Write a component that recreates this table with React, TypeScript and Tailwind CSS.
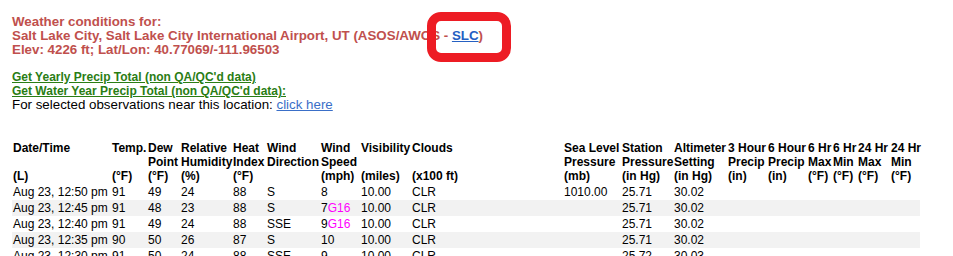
import React from 'react';

const font = { fontFamily: '"Liberation Sans", Arial, sans-serif' };

type Col = { w: string; head: [string, string, string] };

const cols: Col[] = [
  { w: 'w-[99px]', head: ['Date/Time', '', '(L)'] },
  { w: 'w-[36px]', head: ['Temp.', '', '(°F)'] },
  { w: 'w-[33px]', head: ['Dew', 'Point', '(°F)'] },
  { w: 'w-[52px]', head: ['Relative', 'Humidity', '(%)'] },
  { w: 'w-[34px]', head: ['Heat', 'Index', '(°F)'] },
  { w: 'w-[54px]', head: ['Wind', 'Direction', ''] },
  { w: 'w-[40px]', head: ['Wind', 'Speed', '(mph)'] },
  { w: 'w-[51px]', head: ['Visibility', '', '(miles)'] },
  { w: 'w-[152px]', head: ['Clouds', '', '(x100 ft)'] },
  { w: 'w-[58px]', head: ['Sea Level', 'Pressure', '(mb)'] },
  { w: 'w-[52px]', head: ['Station', 'Pressure', '(in Hg)'] },
  { w: 'w-[54px]', head: ['Altimeter', 'Setting', '(in Hg)'] },
  { w: 'w-[40px]', head: ['3 Hour', 'Precip', '(in)'] },
  { w: 'w-[40px]', head: ['6 Hour', 'Precip', '(in)'] },
  { w: 'w-[25px]', head: ['6 Hr', 'Max', '(°F)'] },
  { w: 'w-[25px]', head: ['6 Hr', 'Min', '(°F)'] },
  { w: 'w-[33px]', head: ['24 Hr', 'Max', '(°F)'] },
  { w: 'w-[30px]', head: ['24 Hr', 'Min', '(°F)'] },
];

type Row = {
  time: string; temp: string; dew: string; rh: string; heat: string; dir: string;
  spd: string; gust?: string; vis: string; clouds: string; slp: string; stn: string; alt: string;
};

const rows: Row[] = [
  { time: 'Aug 23, 12:50 pm', temp: '91', dew: '49', rh: '24', heat: '88', dir: 'S', spd: '8', vis: '10.00', clouds: 'CLR', slp: '1010.00', stn: '25.71', alt: '30.02' },
  { time: 'Aug 23, 12:45 pm', temp: '91', dew: '48', rh: '23', heat: '88', dir: 'S', spd: '7', gust: 'G16', vis: '10.00', clouds: 'CLR', slp: '', stn: '25.71', alt: '30.02' },
  { time: 'Aug 23, 12:40 pm', temp: '91', dew: '49', rh: '24', heat: '88', dir: 'SSE', spd: '9', gust: 'G16', vis: '10.00', clouds: 'CLR', slp: '', stn: '25.71', alt: '30.02' },
  { time: 'Aug 23, 12:35 pm', temp: '90', dew: '50', rh: '26', heat: '87', dir: 'S', spd: '10', vis: '10.00', clouds: 'CLR', slp: '', stn: '25.71', alt: '30.02' },
  { time: 'Aug 23, 12:30 pm', temp: '91', dew: '50', rh: '24', heat: '88', dir: 'SSE', spd: '9', vis: '10.00', clouds: 'CLR', slp: '', stn: '25.72', alt: '30.03' },
];

const td = 'px-[1px] py-[1px] align-top whitespace-nowrap';

export default function App() {
  return (
    <div className="relative w-[953px] h-[256px] overflow-hidden bg-white text-black pl-[12px] pt-[15px]" style={font}>
      {/* station title */}
      <div className="text-[13.33px] font-bold leading-[14px] text-[#c0504d]">
        <div>Weather conditions for:</div>
        <div>
          Salt Lake City, Salt Lake City International Airport, UT (ASOS/AWOS -{' '}
          <a className="text-[#2560c2] underline">SLC</a>)
        </div>
        <div>Elev: 4226 ft; Lat/Lon: 40.77069/-111.96503</div>
      </div>

      {/* annotation box */}
      <div className="absolute left-[427px] top-[12px] w-[84px] h-[50px] border-[9px] border-[#ed1c24] rounded-[14px]" />

      <div className="mt-[13px] leading-[14px]">
        <div className="text-[12px] font-bold"><a className="text-[#2a7d14] underline">Get Yearly Precip Total (non QA/QC'd data)</a></div>
        <div className="text-[12px] font-bold"><a className="text-[#2a7d14] underline">Get Water Year Precip Total (non QA/QC'd data):</a></div>
        <div className="text-[13.33px]">
          For selected observations near this location: <a className="text-[#3a6fc8] underline">click here</a>
        </div>
      </div>

      <table className="mt-[28px] table-fixed border-collapse w-[908px] text-[12px] leading-[14px]">
        <colgroup>
          {cols.map((c, i) => <col key={i} className={c.w} />)}
        </colgroup>
        <thead>
          <tr>
            {cols.map((c, i) => (
              <th key={i} className="px-[1px] py-[1px] text-left align-top font-bold whitespace-nowrap">
                <div className="h-[14px]">{c.head[0]}</div>
                <div className="h-[14px]">{c.head[1]}</div>
                <div className="h-[14px]">{c.head[2]}</div>
              </th>
            ))}
          </tr>
        </thead>
        <tbody>
          {rows.map((r, i) => (
            <tr key={i} className={i % 2 ? 'bg-[#f2f2f2]' : ''}>
              <td className={td}>{r.time}</td>
              <td className={td}>{r.temp}</td>
              <td className={td}>{r.dew}</td>
              <td className={td}>{r.rh}</td>
              <td className={td}>{r.heat}</td>
              <td className={td}>{r.dir}</td>
              <td className={td}>{r.spd}{r.gust && <span className="text-[#ff00ff]">{r.gust}</span>}</td>
              <td className={td}>{r.vis}</td>
              <td className={td}>{r.clouds}</td>
              <td className={td}>{r.slp}</td>
              <td className={td}>{r.stn}</td>
              <td className={td}>{r.alt}</td>
              <td className={td}></td>
              <td className={td}></td>
              <td className={td}></td>
              <td className={td}></td>
              <td className={td}></td>
              <td className={td}></td>
            </tr>
          ))}
        </tbody>
      </table>
    </div>
  );
}
